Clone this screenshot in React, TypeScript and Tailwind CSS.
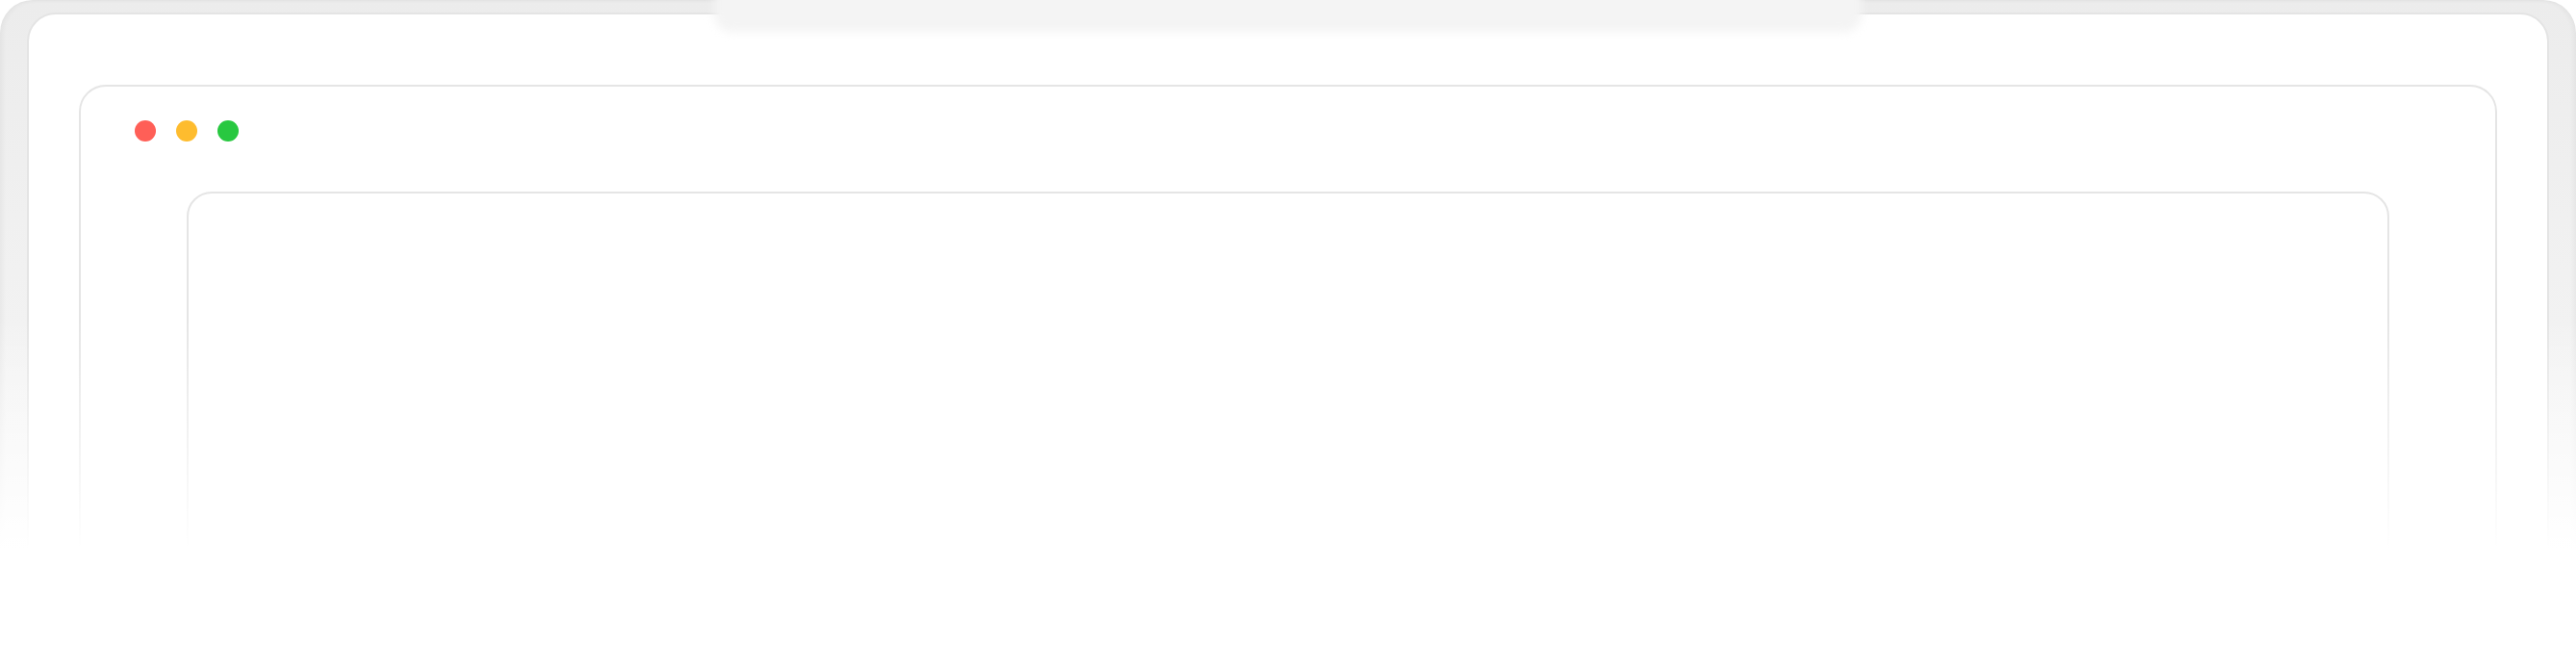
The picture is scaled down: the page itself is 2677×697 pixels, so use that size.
import React from 'react';

const TrafficLights: React.FC = () => (
  <div className="flex items-center gap-[21px]">
    <span className="w-[22px] h-[22px] shrink-0 rounded-full bg-[#ff5f57]" />
    <span className="w-[22px] h-[22px] shrink-0 rounded-full bg-[#febc2e]" />
    <span className="w-[22px] h-[22px] shrink-0 rounded-full bg-[#28c840]" />
  </div>
);

const App: React.FC = () => {
  return (
    <div className="relative w-[2677px] h-[697px] overflow-hidden bg-white">
      {/* Device frame */}
      <div className="h-[900px] rounded-[34px] bg-gradient-to-b from-[#ececec] via-[#f4f4f4] to-[#f4f4f4] pt-[13px] px-[28px] shadow-[inset_3px_0_5px_rgba(0,0,0,0.04),inset_-3px_0_5px_rgba(0,0,0,0.04)]">
        <div className="h-full rounded-t-[30px] border-2 border-[#e4e4e4] bg-white pt-[73px] px-[52px]">
          {/* Window */}
          <div className="h-full rounded-t-[28px] border-2 border-[#e5e5e5] bg-white pt-[35px]">
            <div className="pl-[56px]">
              <TrafficLights />
            </div>
            {/* Inner panel */}
            <div className="mt-[52px] mx-[110px] h-[700px] rounded-t-[26px] border-2 border-[#e5e5e5] bg-white" />
          </div>
        </div>
      </div>

      {/* Notch */}
      <div className="absolute top-[-10px] left-[742px] w-[1193px] h-[43px] rounded-b-[18px] bg-[#f4f4f4] blur-[5px]" />

      {/* Bottom fade */}
      <div className="absolute left-0 right-0 top-[330px] h-[240px] bg-gradient-to-b from-white/0 to-white" />
      <div className="absolute left-0 right-0 top-[570px] bottom-0 bg-white" />
    </div>
  );
};

export default App;
